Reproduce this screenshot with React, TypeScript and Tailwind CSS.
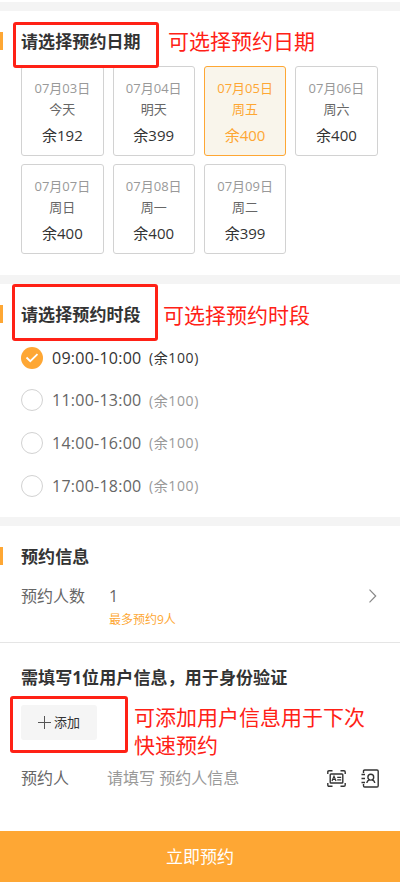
import { useState } from 'react'
import clsx from 'clsx'

const DAYS = [
  { date: '07月03日', day: '今天', left: 192 },
  { date: '07月04日', day: '明天', left: 399 },
  { date: '07月05日', day: '周五', left: 400 },
  { date: '07月06日', day: '周六', left: 400 },
  { date: '07月07日', day: '周日', left: 400 },
  { date: '07月08日', day: '周一', left: 400 },
  { date: '07月09日', day: '周二', left: 399 },
]

const SLOTS = ['09:00-10:00', '11:00-13:00', '14:00-16:00', '17:00-18:00']

function Heading({ children }: { children: string }) {
  return (
    <div className="flex h-[18px] items-center">
      <span className="h-[18px] w-[3px] bg-[#fea734]" />
      <h2 className="mt-[2px] ml-[18px] text-[17px] leading-[18px] font-bold tracking-[0.1px] text-[#333]">{children}</h2>
    </div>
  )
}

function ScanIcon() {
  return (
    <svg className="mt-px" width="19" height="17" viewBox="0 0 19 17" fill="none" stroke="#333" strokeWidth="1.4">
      <path d="M0.800 4V2Q0.800 0.800 2 0.800H5.500M13.500 0.800H17q1.200 0 1.200 1.200V4M18.200 13v2q0 1.200-1.200 1.200H13.500M5.500 16.200H2Q0.800 16.200 0.800 15V13" />
      <rect x="3.200" y="4" width="12.600" height="9" rx="0.800" />
      <path d="M5 11 7 6.200 9 11M5.700 9.500h2.600M10.200 7.400h4M10.200 9.800h4" strokeWidth="1.200" />
    </svg>
  )
}

function ContactIcon() {
  return (
    <svg width="18" height="19" viewBox="0 0 18 19" fill="none" stroke="#333" strokeWidth="1.4">
      <path d="M2.500 4V2.200Q2.500 1 3.700 1H16q1.200 0 1.200 1.200v14.600Q17.200 18 16 18H3.700q-1.200 0-1.200-1.200V15" />
      <path d="M0.500 5.500h3.500M0.500 9.500h3.500M0.500 13.500h3.500" />
      <circle cx="9.800" cy="8.200" r="2.900" />
      <path d="M5.800 14c.2-1.800 1.300-2.700 2.700-3.100M13.800 14c-.2-1.800-1.300-2.700-2.700-3.100" />
    </svg>
  )
}

export default function App() {
  const [day, setDay] = useState(2)
  const [slot, setSlot] = useState(0)

  return (
    <div className="flex h-[882px] w-[400px] flex-col overflow-hidden bg-white pt-[2px] font-['Open_Sans','Noto_Sans_CJK_SC',sans-serif] text-[#333]">
      <section className="relative h-[273px] shrink-0 border-t-[9px] border-[#f4f4f4] pt-[21px]">
        <Heading>请选择预约日期</Heading>
        <div className="mt-4 mr-[22.4px] ml-[21.2px] grid grid-cols-4 gap-x-[9px] gap-y-2">
          {DAYS.map((d, i) => (
            <button
              key={d.date}
              type="button"
              onClick={() => setDay(i)}
              className={clsx(
                'flex h-[90px] flex-col items-center rounded-[3px] border pt-[11px]',
                day === i ? 'border-[#fea734] bg-[#f9f5eb] text-[#fea734]' : 'border-[#d2d2d2]',
              )}
            >
              <span className={clsx('text-[13px] leading-[21px]', day !== i && 'text-[#999]')}>{d.date}</span>
              <span className={clsx('text-[13px] leading-[21px]', day !== i && 'text-[#666]')}>{d.day}</span>
              <span className="mt-[2px] text-[15px] leading-[26px]">余{d.left}</span>
            </button>
          ))}
        </div>
        <div className="absolute top-[11px] left-[13px] h-[46px] w-[146px] rounded-[3px] border-[3px] border-[#ff2116]" />
        <p className="absolute top-[15px] left-[168px] text-[21px] leading-[30px] text-[#ff2116]">可选择预约日期</p>
      </section>

      <section className="relative h-[242px] shrink-0 border-t-[9px] border-[#f4f4f4] pt-[21px]">
        <Heading>请选择预约时段</Heading>
        <div className="mt-[13px] ml-[21px] flex flex-col">
          {SLOTS.map((s, i) => (
            <button key={s} type="button" onClick={() => setSlot(i)} className="flex h-[42.6px] items-center pt-px text-left">
              {slot === i ? (
                <span className="flex size-[22px] items-center justify-center rounded-full bg-[#fea734]">
                  <svg width="14" height="10" viewBox="0 0 14 10" fill="none" stroke="#fff" strokeWidth="1.8">
                    <path d="M1.500 4.500 5.300 8.200 12.500 1.200" />
                  </svg>
                </span>
              ) : (
                <span className="size-[22px] rounded-full border border-[#d2d2d2]" />
              )}
              <span className={clsx('ml-[9px] w-[97px] text-[16px] tracking-[0.25px]', slot !== i && 'text-[#666]')}>{s}</span>
              <span className={clsx('text-[14px] tracking-[0.6px]', slot !== i && 'text-[#999]')}>(余100)</span>
            </button>
          ))}
        </div>
        <div className="absolute top-0 left-[12px] h-[57px] w-[146px] rounded-[3px] border-[3px] border-[#ff2116]" />
        <p className="absolute top-[16px] left-[163px] text-[21px] leading-[30px] text-[#ff2116]">可选择预约时段</p>
      </section>

      <section className="h-[126px] shrink-0 border-t-[9px] border-b border-t-[#f4f4f4] border-b-[#e5e5e5] pt-[21px]">
        <Heading>预约信息</Heading>
        <div className="mt-[19px] flex pr-[23px] pl-[21px] text-[16px] leading-6 text-[#666]">
          <span className="w-[88px]">预约人数</span>
          <div className="flex-1">
            <div>1</div>
            <div className="mt-px text-[12px] leading-[22px] text-[#fea734]">最多预约9人</div>
          </div>
          <svg className="mt-[5px]" width="9" height="14" viewBox="0 0 9 14" fill="none" stroke="#888" strokeWidth="1.2">
            <path d="M1.500 0.700 7.700 7 1.500 13.300" />
          </svg>
        </div>
      </section>

      <section className="relative flex-1 pt-[23px] pl-[21px]">
        <h2 className="text-[17px] leading-6 font-bold tracking-[0.1px]">需填写1位用户信息，用于身份验证</h2>
        <button type="button" className="mt-[15px] flex h-[35px] w-[76px] items-center justify-center gap-[3px] rounded-[3px] bg-[#f5f5f5] text-[13px]">
          <svg width="13" height="13" viewBox="0 0 13 13" stroke="#555" strokeWidth="1">
            <path d="M6.500 0v13M0 6.500h13" />
          </svg>
          添加
        </button>
        <div className="mt-[26px] flex h-6 items-center pr-[21px] text-[16px] leading-6">
          <span className="w-[86px] text-[#666]">预约人</span>
          <span className="flex-1 text-[#999]">请填写 预约人信息</span>
          <ScanIcon />
          <span className="ml-[15px]">
            <ContactIcon />
          </span>
        </div>
        <div className="absolute top-[53px] left-[10px] h-[57px] w-[118px] rounded-[3px] border-[3px] border-[#ff2116]" />
        <p className="absolute top-[60px] left-[134px] text-[21px] leading-7 text-[#ff2116]">
          可添加用户信息用于下次
          <br />
          快速预约
        </p>
      </section>

      <button type="button" className="h-[51px] shrink-0 bg-[#fea734] text-[17px] text-white">
        立即预约
      </button>
    </div>
  )
}
